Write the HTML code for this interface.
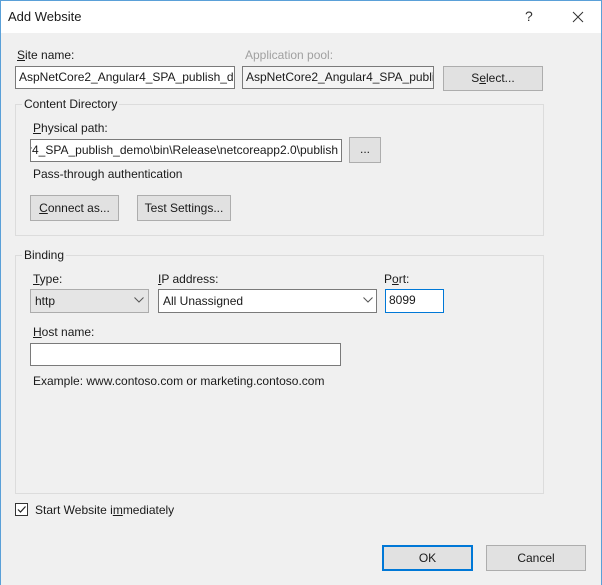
<!DOCTYPE html>
<html><head><meta charset="utf-8"><style>
*{box-sizing:border-box;margin:0;padding:0}
body{width:602px;height:585px;overflow:hidden;background:#f0f0f0;font-family:"Liberation Sans",sans-serif;font-size:12px;color:#1a1a1a;position:relative}
.win{position:absolute;left:0;top:0;width:602px;height:585px;border:1px solid #5aa0d8;border-bottom:none;background:#f0f0f0}
.title{position:absolute;left:1px;top:1px;width:600px;height:32px;background:#fff}
.a{position:absolute;white-space:nowrap}
.inp{position:absolute;background:#fff;border:1px solid #7a7a7a;height:23px;padding:3px 3px;overflow:hidden;white-space:nowrap}
.btn{position:absolute;background:#e1e1e1;border:1px solid #adadad;text-align:center;white-space:nowrap}
.grp{position:absolute;border:1px solid #dcdcdc}
.gl{position:absolute;background:#f0f0f0;padding:0 2px}
u{text-decoration:underline}
.combo{position:absolute;border:1px solid #7a7a7a;height:24px;padding:4px 4px;white-space:nowrap}
</style></head><body>
<div class="win"></div>
<div class="title"></div>
<div class="a" style="left:8px;top:9px;font-size:13px">Add Website</div>
<div class="a" style="left:525px;top:8px;font-size:14px;color:#333">?</div>
<svg class="a" style="left:572px;top:11px" width="12" height="12"><path d="M1 1L11 11M11 1L1 11" stroke="#333" stroke-width="1"/></svg>

<div class="a" style="left:17px;top:48px"><u>S</u>ite name:</div>
<div class="inp" style="left:15px;top:66px;width:220px">AspNetCore2_Angular4_SPA_publish_demo</div>
<div class="a" style="left:245px;top:48px;color:#a0a0a0">Application pool:</div>
<div class="inp" style="left:242px;top:66px;width:192px;background:#f4f4f4">AspNetCore2_Angular4_SPA_publish_demo</div>
<div class="btn" style="left:443px;top:66px;width:100px;height:25px;line-height:23px">S<u>e</u>lect...</div>

<div class="grp" style="left:15px;top:104px;width:529px;height:132px"></div>
<div class="gl" style="left:22px;top:97px">Content Directory</div>
<div class="a" style="left:33px;top:121px"><u>P</u>hysical path:</div>
<div class="inp" style="left:30px;top:139px;width:312px;height:23px;direction:rtl;text-align:left"><span style="direction:ltr;unicode-bidi:bidi-override">...Angular4_SPA_publish_demo\bin\Release\netcoreapp2.0\publish</span></div>
<div class="btn" style="left:349px;top:137px;width:32px;height:26px;line-height:22px">...</div>
<div class="a" style="left:33px;top:167px">Pass-through authentication</div>
<div class="btn" style="left:30px;top:195px;width:89px;height:26px;line-height:24px"><u>C</u>onnect as...</div>
<div class="btn" style="left:137px;top:195px;width:94px;height:26px;line-height:24px">Test Settings...</div>

<div class="grp" style="left:15px;top:255px;width:529px;height:239px"></div>
<div class="gl" style="left:22px;top:248px">Binding</div>
<div class="a" style="left:33px;top:272px"><u>T</u>ype:</div>
<div class="combo" style="left:30px;top:289px;width:119px;background:#e5e5e5;border-color:#acacac">http</div>
<svg class="a" style="left:134px;top:297px" width="10" height="6"><path d="M0.5 0.5L5 5L9.5 0.5" stroke="#555" fill="none"/></svg>
<div class="a" style="left:158px;top:272px"><u>I</u>P address:</div>
<div class="combo" style="left:158px;top:289px;width:219px;background:#fff">All Unassigned</div>
<svg class="a" style="left:363px;top:297px" width="10" height="6"><path d="M0.5 0.5L5 5L9.5 0.5" stroke="#555" fill="none"/></svg>
<div class="a" style="left:384px;top:272px">P<u>o</u>rt:</div>
<div class="inp" style="left:385px;top:289px;width:59px;height:24px;border-color:#0078d7">8099</div>
<div class="a" style="left:33px;top:325px"><u>H</u>ost name:</div>
<div class="inp" style="left:30px;top:343px;width:311px;height:23px"></div>
<div class="a" style="left:33px;top:374px">Example: www.contoso.com or marketing.contoso.com</div>

<div class="a" style="left:15px;top:503px;width:13px;height:13px;border:1px solid #333;background:#fff"></div>
<svg class="a" style="left:16px;top:504px" width="11" height="11"><path d="M2 5.5L4.5 8L9.5 2.5" stroke="#222" stroke-width="1.2" fill="none"/></svg>
<div class="a" style="left:35px;top:503px">Start Website i<u>m</u>mediately</div>

<div class="btn" style="left:382px;top:545px;width:91px;height:26px;line-height:22px;border:2px solid #0078d7">OK</div>
<div class="btn" style="left:486px;top:545px;width:100px;height:26px;line-height:24px">Cancel</div>
</body></html>
